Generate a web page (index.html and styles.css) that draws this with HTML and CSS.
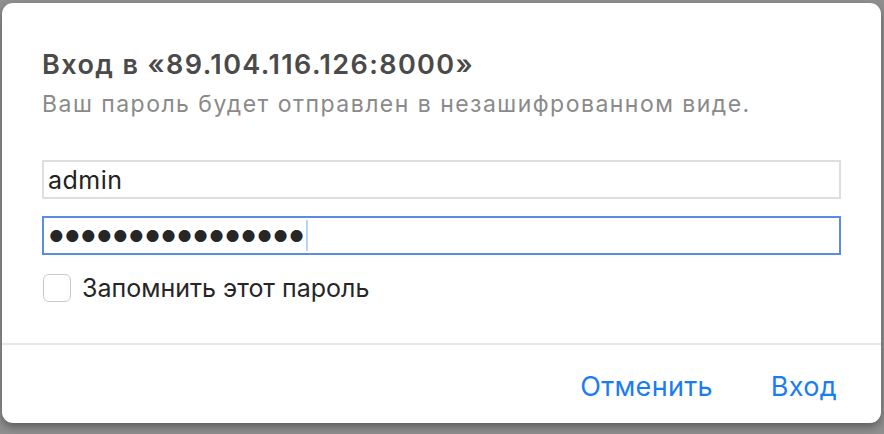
FILE: index.html
```html
<!DOCTYPE html>
<html lang="ru">
<head>
<meta charset="utf-8">
<link rel="stylesheet" href="styles.css">
</head>
<body>
<div class="dialog">
  <div class="content">
    <h1 class="title">Вход в «89.104.116.126:8000»</h1>
    <p class="subtitle">Ваш пароль будет отправлен в незашифрованном виде.</p>
    <div class="fields">
      <div class="field">admin</div>
      <div class="field focused"><span class="dots">●●●●●●●●●●●●●●●●</span><span class="caret"></span></div>
    </div>
    <label class="remember"><span class="checkbox"></span><span>Запомнить этот пароль</span></label>
  </div>
  <div class="footer">
    <span class="btn">Отменить</span>
    <span class="btn">Вход</span>
  </div>
</div>
</body>
</html>
```
FILE: styles.css
```css
html, body {
  margin: 0;
  padding: 0;
  height: 100%;
}
body {
  background: #8f8f8f;
  font-family: Inter, "Noto Sans", sans-serif;
  padding: 3px 3px 0 2px;
  box-sizing: border-box;
}
.dialog {
  width: 879px;
  height: 420px;
  background: #fff;
  border-radius: 11px;
  box-shadow: 0 4px 8px rgba(0,0,0,0.35);
  display: flex;
  flex-direction: column;
}
.content {
  padding: 46px 40px 0 40px;
  height: 342px;
  box-sizing: border-box;
  border-bottom: 2px solid #e6e6e6;
}
.title {
  margin: 0;
  font-size: 27px;
  font-weight: 600;
  letter-spacing: 1.4px;
  color: #4a4a4a;
  line-height: 32px;
}
.subtitle {
  margin: 9px 0 0 0;
  font-size: 23px;
  letter-spacing: 1.47px;
  color: #8a8a8a;
  line-height: 28px;
}
.fields {
  margin-top: 42px;
  display: flex;
  flex-direction: column;
  gap: 17px;
}
.field {
  height: 39px;
  box-sizing: border-box;
  border: 2px solid #dedede;
  padding: 0 4px;
  font-size: 25px;
  letter-spacing: 0.5px;
  color: #222;
  display: flex;
  align-items: center;
}
.field.focused {
  border-color: #5b8ce3;
}
.dots {
  font-size: 16px;
  letter-spacing: 1.4px;
  color: #262626;
  margin-left: 1px;
}
.caret {
  width: 2px;
  height: 31px;
  background: #b8d4fb;
  margin-left: 1px;
}
.remember {
  margin-top: 18px;
  display: flex;
  align-items: center;
  gap: 11px;
  font-size: 25px;
  line-height: 30px;
  color: #262626;
}
.checkbox {
  width: 28px;
  height: 28px;
  box-sizing: border-box;
  border: 1px solid #c9c9c9;
  border-radius: 6px;
  margin-left: 1px;
}
.footer {
  flex: 1;
  display: flex;
  justify-content: flex-end;
  align-items: center;
  gap: 58px;
  padding: 4px 44px 0 0;
}
.btn {
  font-size: 27px;
  letter-spacing: 0.3px;
  color: #1a7cf5;
}
```
